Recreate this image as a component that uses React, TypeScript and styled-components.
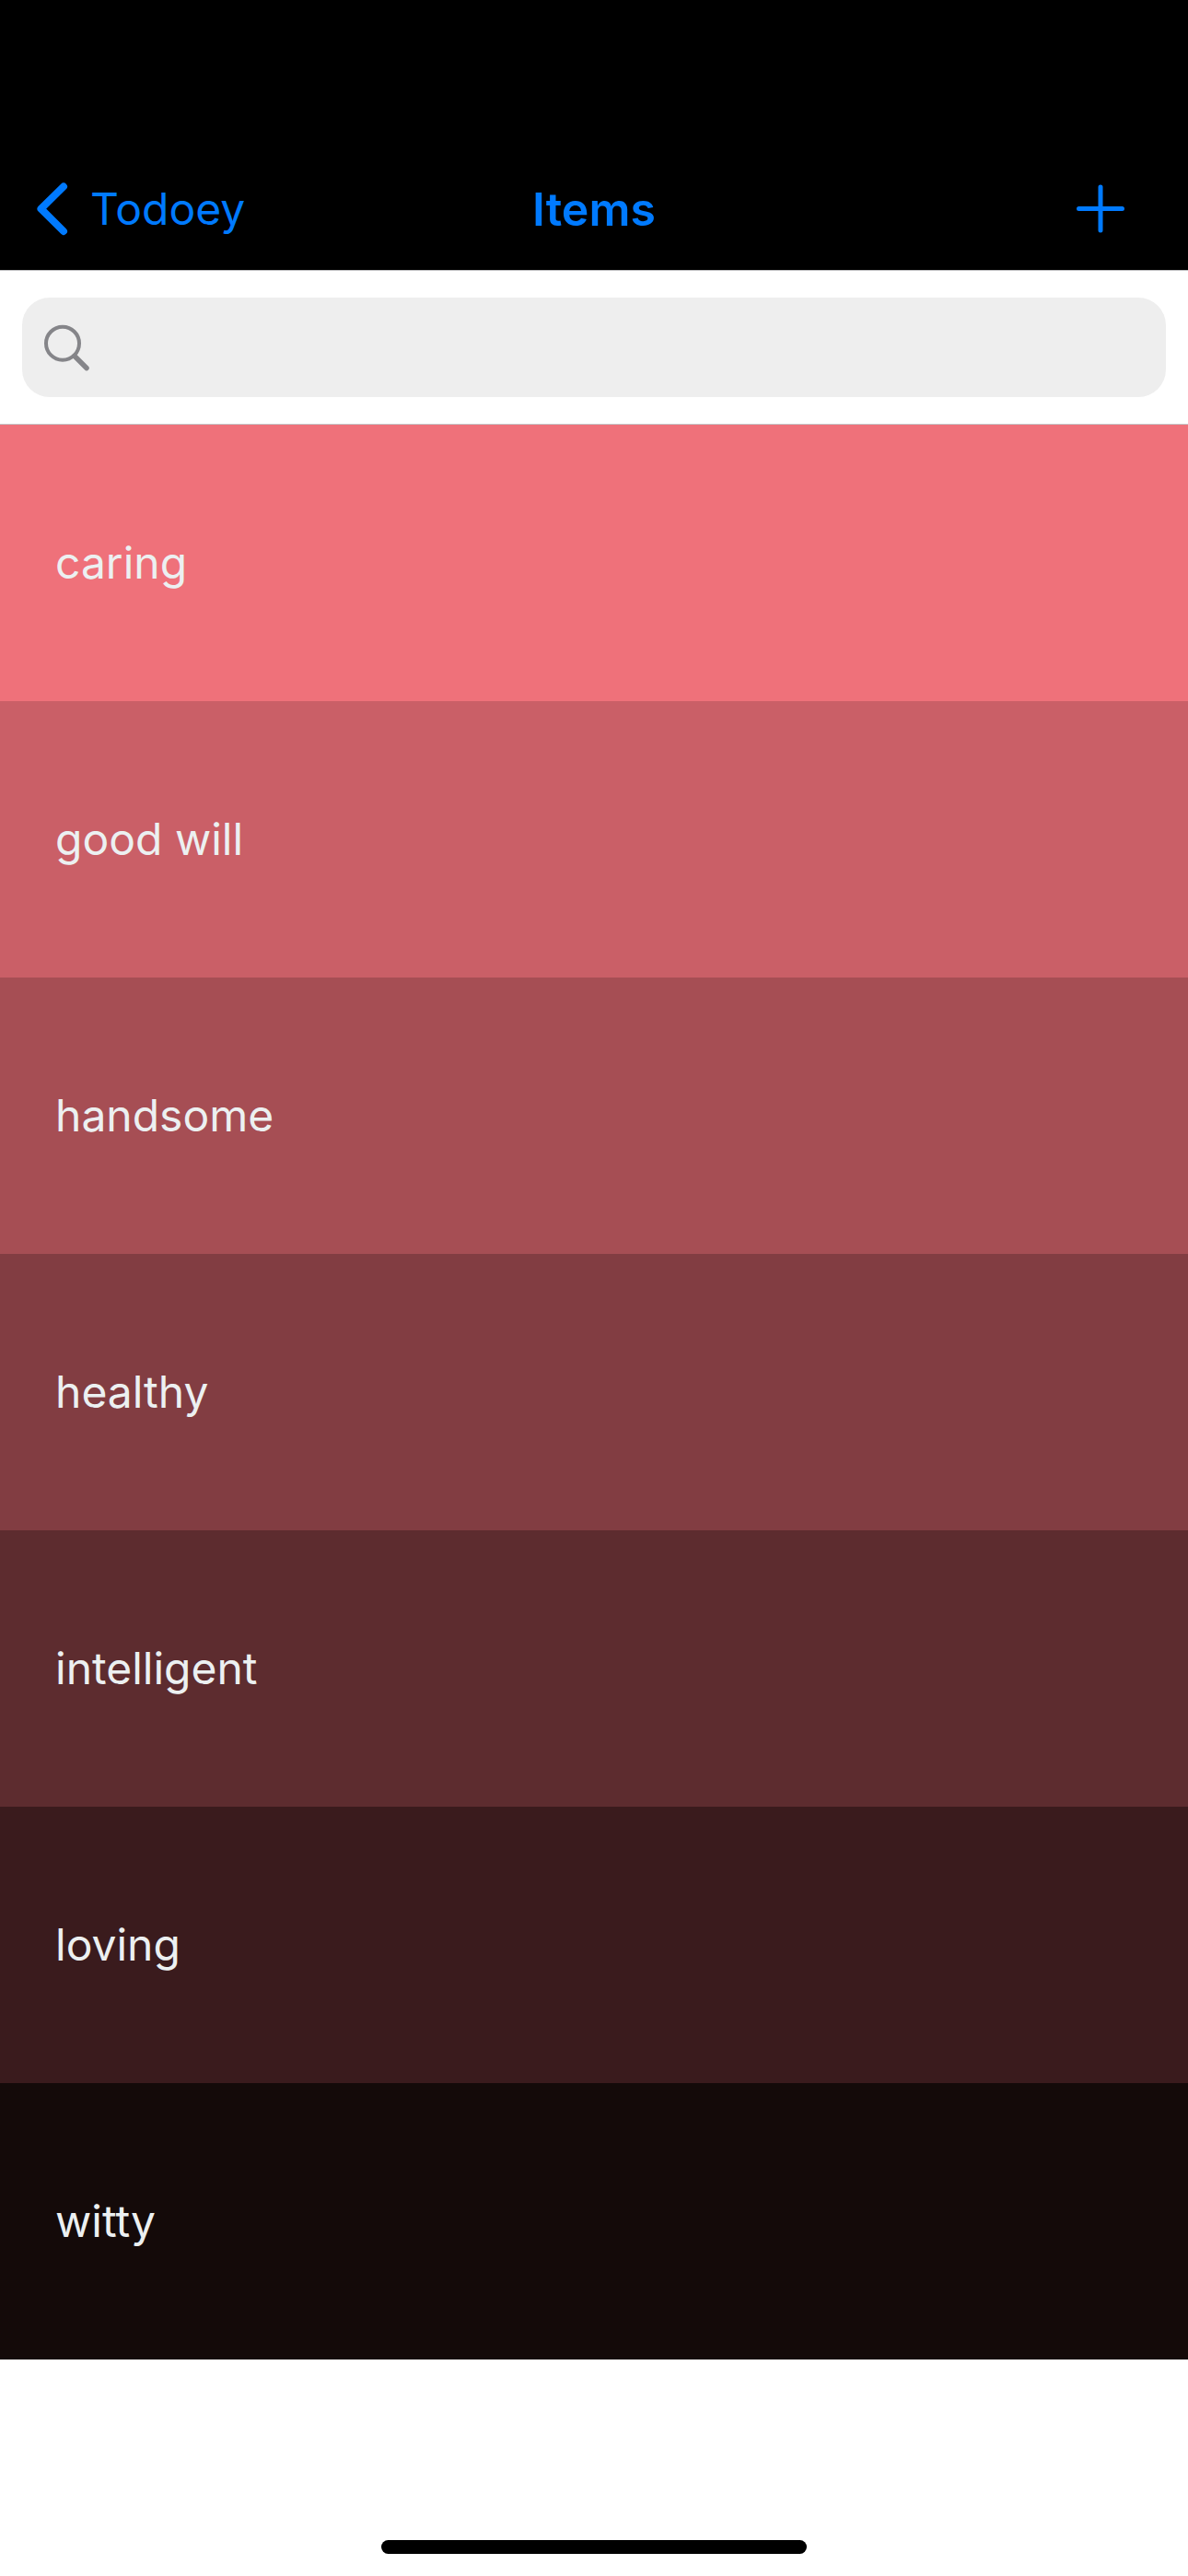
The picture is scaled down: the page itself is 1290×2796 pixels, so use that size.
import React, { useState } from "react";
import styled, { createGlobalStyle } from "styled-components";

const GlobalStyle = createGlobalStyle`
  *, *::before, *::after { box-sizing: border-box; }
  body {
    margin: 0;
    background: #ffffff;
    font-family: Inter, "Liberation Sans", sans-serif;
    font-size: 48px;
    line-height: 60px;
  }
`;

const Screen = styled.div`
  display: flex;
  flex-direction: column;
  min-height: 100vh;
`;

const NavBar = styled.header`
  display: grid;
  grid-template-columns: 1fr auto 1fr;
  align-items: center;
  height: 294px;
  padding: 161px 36px 0;
  background: #000000;
  border-bottom: 1px solid #c4c4c6;
  color: #007aff;
`;

const BackLink = styled.a`
  display: flex;
  align-items: center;
  justify-self: start;
  gap: 20px;
  color: inherit;
  text-decoration: none;
`;

const Title = styled.h1`
  margin: 0;
  font-size: 50px;
  font-weight: 600;
  line-height: 60px;
`;

const AddButton = styled.button`
  display: flex;
  justify-self: end;
  padding: 0 24px;
  border: 0;
  background: none;
  color: inherit;
  cursor: pointer;
`;

const SearchBar = styled.form`
  padding: 29px 24px;
  background: #ffffff;
  border-bottom: 1px solid #c4c4c6;
`;

const SearchField = styled.label`
  display: flex;
  align-items: center;
  gap: 12px;
  height: 108px;
  padding: 0 20px;
  border-radius: 30px;
  background: #eeeeee;
  color: #858589;
`;

const SearchInput = styled.input`
  flex: 1;
  min-width: 0;
  padding: 0;
  border: 0;
  outline: 0;
  background: transparent;
  color: #000000;
  font: inherit;
`;

const List = styled.ul`
  margin: 0;
  padding: 0;
  list-style: none;
`;

const Row = styled.li<{ $shade: string }>`
  display: flex;
  align-items: center;
  height: 300px;
  padding: 0 60px;
  background: ${({ $shade }) => $shade};
  color: #ecf0f1;
`;

const Footer = styled.footer`
  display: flex;
  justify-content: center;
  margin-top: auto;
  padding-bottom: 24px;
`;

const HomeIndicator = styled.div`
  width: 462px;
  height: 15px;
  border-radius: 8px;
  background: #000000;
`;

const items = [
  { name: "caring", shade: "#ef717a" },
  { name: "good will", shade: "#ca5f67" },
  { name: "handsome", shade: "#a64e54" },
  { name: "healthy", shade: "#823d42" },
  { name: "intelligent", shade: "#5d2c2f" },
  { name: "loving", shade: "#3a1b1d" },
  { name: "witty", shade: "#140a09" },
];

const ChevronIcon = () => (
  <svg width="42" height="60" viewBox="0 0 42 60" fill="none" aria-hidden="true">
    <path d="M33 5.5 8.5 29.7 33 54" stroke="currentColor" strokeWidth="8" strokeLinecap="round" strokeLinejoin="round" />
  </svg>
);

const PlusIcon = () => (
  <svg width="70" height="70" viewBox="0 0 70 70" fill="none" aria-hidden="true">
    <path d="M35 11v47M11.5 34.500h47" stroke="currentColor" strokeWidth="5" strokeLinecap="round" />
  </svg>
);

const SearchIcon = () => (
  <svg width="56" height="56" viewBox="0 0 56 56" fill="none" aria-hidden="true">
    <circle cx="24" cy="23.7" r="18" stroke="currentColor" strokeWidth="4" />
    <path d="M37 37.5 50 50.5" stroke="currentColor" strokeWidth="5.5" strokeLinecap="round" />
  </svg>
);

export default function App() {
  const [query, setQuery] = useState("");
  const visible = items.filter((item) => item.name.includes(query.toLowerCase()));

  return (
    <Screen>
      <GlobalStyle />
      <NavBar>
        <BackLink href="#categories">
          <ChevronIcon />
          Todoey
        </BackLink>
        <Title>Items</Title>
        <AddButton type="button" aria-label="Add item">
          <PlusIcon />
        </AddButton>
      </NavBar>
      <SearchBar role="search" onSubmit={(event) => event.preventDefault()}>
        <SearchField>
          <SearchIcon />
          <SearchInput
            type="text"
            aria-label="Search items"
            value={query}
            onChange={(event) => setQuery(event.target.value)}
          />
        </SearchField>
      </SearchBar>
      <List>
        {visible.map((item) => (
          <Row key={item.name} $shade={item.shade}>
            {item.name}
          </Row>
        ))}
      </List>
      <Footer>
        <HomeIndicator />
      </Footer>
    </Screen>
  );
}
